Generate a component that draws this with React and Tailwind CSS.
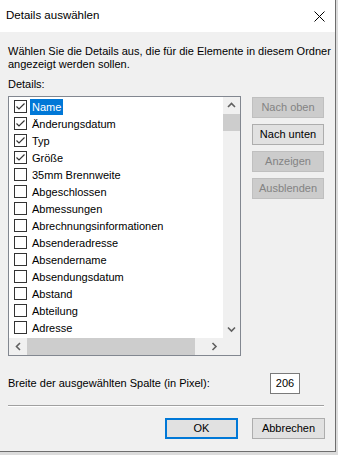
import React from "react";

const items = [
  ["Name", true],
  ["Änderungsdatum", true],
  ["Typ", true],
  ["Größe", true],
  ["35mm Brennweite", false],
  ["Abgeschlossen", false],
  ["Abmessungen", false],
  ["Abrechnungsinformationen", false],
  ["Absenderadresse", false],
  ["Absendername", false],
  ["Absendungsdatum", false],
  ["Abstand", false],
  ["Abteilung", false],
  ["Adresse", false],
  ["", false],
];

function Chevron({ dir }) {
  const paths = {
    up: "M1 5 L4.5 1.5 L8 5",
    down: "M1 1.5 L4.5 5 L8 1.5",
    left: "M5 1 L1.5 4.5 L5 8",
    right: "M1.5 1 L5 4.5 L1.5 8",
  };
  const vertical = dir === "up" || dir === "down";
  return (
    <svg
      width={vertical ? 9 : 7}
      height={vertical ? 7 : 9}
      viewBox={vertical ? "0 0 9 7" : "0 0 7 9"}
    >
      <path d={paths[dir]} fill="none" stroke="#606060" strokeWidth="1.6" />
    </svg>
  );
}

function Check({ checked }) {
  return (
    <div className="w-[13px] h-[13px] border border-[#333333] bg-white flex items-center justify-center shrink-0">
      {checked && (
        <svg width="11" height="11" viewBox="0 0 11 11">
          <path d="M1.5 5.5 L4 8 L9.5 2.5" fill="none" stroke="#333333" strokeWidth="1.2" />
        </svg>
      )}
    </div>
  );
}

function SideButton({ children, enabled }) {
  return (
    <div
      className={
        "h-[21px] w-[72px] flex items-center justify-center border " +
        (enabled
          ? "bg-[#e1e1e1] border-[#adadad] text-black"
          : "bg-[#cccccc] border-[#bfbfbf] text-[#838383]")
      }
    >
      {children}
    </div>
  );
}

export default function App() {
  return (
    <div
      className="w-[338px] h-[455px] bg-[#dcdcdc] overflow-hidden text-[11px] text-black"
      style={{ fontFamily: '"Liberation Sans", Arial, sans-serif' }}
    >
      <div className="w-[336px] h-[452px] bg-[#f0f0f0] border-r border-b border-[#6e6e6e] flex flex-col">
        <div className="h-[32px] bg-white flex items-center justify-between pl-[6px] pr-[10px] shrink-0">
          <span className="text-[11.5px]">Details auswählen</span>
          <svg width="11" height="11" viewBox="0 0 11 11">
            <path d="M0.5 0.5 L10.5 10.5 M10.5 0.5 L0.5 10.5" stroke="#000" strokeWidth="1" />
          </svg>
        </div>
        <div className="flex-1 px-[8px] pt-[13px] flex flex-col">
          <p className="leading-[13px] whitespace-nowrap">
            Wählen Sie die Details aus, die für die Elemente in diesem Ordner
            <br />
            angezeigt werden sollen.
          </p>
          <div className="mt-[7px] leading-[13px]">Details:</div>
          <div className="mt-[5px] flex items-start">
            <div className="w-[233px] h-[260px] border border-[#828790] bg-white flex flex-col">
              <div className="flex h-[241px]">
                <div className="w-[214px] overflow-hidden pt-[1px]">
                  {items.map(([name, checked], i) => (
                    <div key={i} className="h-[17px] flex items-center pl-[5px]">
                      <Check checked={checked} />
                      {name && (
                        <span
                          className={
                            "ml-[3px] px-[2px] h-[16px] leading-[16px] whitespace-nowrap " +
                            (i === 0 ? "bg-[#0078d7] text-white" : "")
                          }
                        >
                          {name}
                        </span>
                      )}
                    </div>
                  ))}
                </div>
                <div className="w-[17px] bg-[#f0f0f0] flex flex-col">
                  <div className="h-[17px] flex items-center justify-center">
                    <Chevron dir="up" />
                  </div>
                  <div className="h-[17px] bg-[#cdcdcd]" />
                  <div className="flex-1" />
                  <div className="h-[17px] flex items-center justify-center">
                    <Chevron dir="down" />
                  </div>
                </div>
              </div>
              <div className="flex h-[17px]">
                <div className="w-[214px] bg-[#f0f0f0] flex">
                  <div className="w-[18px] flex items-center justify-center">
                    <Chevron dir="left" />
                  </div>
                  <div className="w-[168px] bg-[#cdcdcd]" />
                  <div className="flex-1" />
                  <div className="w-[17px] flex items-center justify-center">
                    <Chevron dir="right" />
                  </div>
                </div>
                <div className="w-[17px] bg-[#f0f0f0]" />
              </div>
            </div>
            <div className="ml-[11px] flex flex-col gap-[6px] pt-[1px]">
              <SideButton>Nach oben</SideButton>
              <SideButton enabled>Nach unten</SideButton>
              <SideButton>Anzeigen</SideButton>
              <SideButton>Ausblenden</SideButton>
            </div>
          </div>
          <div className="mt-[17px] flex items-center h-[21px]">
            <span>Breite der ausgewählten Spalte (in Pixel):</span>
            <div className="ml-auto mr-[27px] w-[30px] h-[21px] border border-[#7a7a7a] bg-white flex items-center justify-center">
              206
            </div>
          </div>
          <div className="mt-[11px] w-[316px] border-t border-[#a0a0a0] border-b border-b-white" />
          <div className="mt-[11px] flex justify-end gap-[14px] pr-[2px]">
            <div className="w-[73px] h-[21px] border-2 border-[#0078d7] bg-[#e1e1e1] flex items-center justify-center">
              OK
            </div>
            <div className="w-[73px] h-[21px] border border-[#adadad] bg-[#e1e1e1] flex items-center justify-center">
              Abbrechen
            </div>
          </div>
        </div>
      </div>
    </div>
  );
}
